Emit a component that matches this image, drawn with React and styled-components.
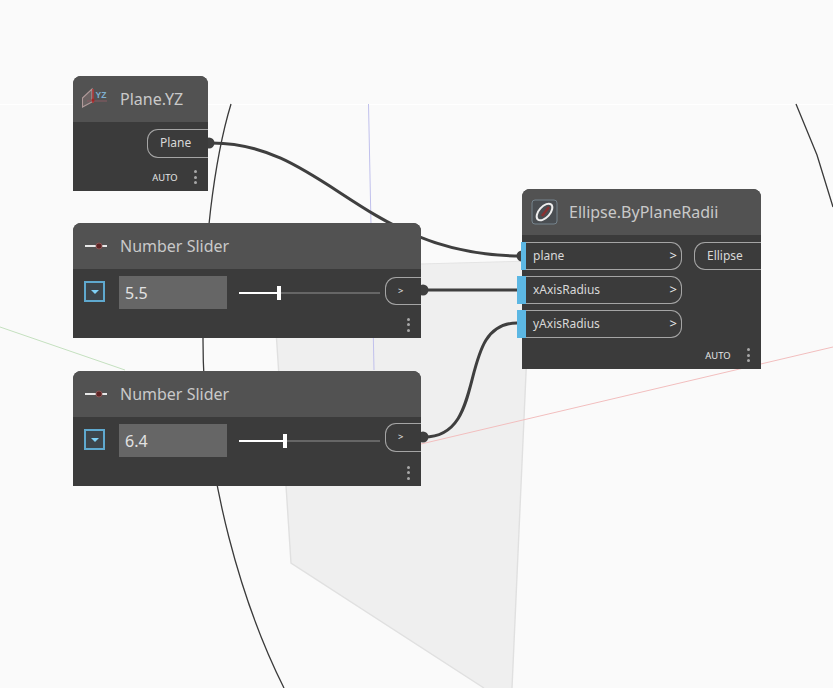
import React from 'react';
import styled, { createGlobalStyle } from 'styled-components';

const Global = createGlobalStyle`
  html, body {
    margin: 0;
    padding: 0;
    background: #fafafa;
  }
`;

const Canvas = styled.div`
  position: relative;
  width: 833px;
  height: 688px;
  overflow: hidden;
  background: #fafafa;
  font-family: "Noto Sans", "Open Sans", sans-serif;
`;

const TopBand = styled.div`
  height: 104px;
  border-bottom: 1px solid #ffffff;
`;

const Drawing = styled.svg`
  position: absolute;
  left: 0;
  top: 0;
  width: 833px;
  height: 688px;
`;

const Node = styled.div`
  position: absolute;
  left: ${(p) => p.$x}px;
  top: ${(p) => p.$y}px;
  width: ${(p) => p.$w}px;
  height: ${(p) => p.$h}px;
  background: #3b3b3b;
  border-radius: 8px 8px 0 0;
  display: flex;
  flex-direction: column;
`;

const Head = styled.div`
  height: 46px;
  flex: none;
  display: flex;
  align-items: center;
  gap: 10px;
  padding-left: 9px;
  background: #525252;
  border-radius: 8px 8px 0 0;
`;

const IconBox = styled.svg`
  width: 28px;
  height: 28px;
  flex: none;
`;

const Title = styled.div`
  color: #c9c9c9;
  font-size: 16px;
  white-space: nowrap;
`;

const Foot = styled.div`
  position: absolute;
  right: 0;
  bottom: 0;
  height: ${(p) => p.$h || 28}px;
  display: flex;
  align-items: center;
  gap: 16px;
  padding-right: 11.5px;
`;

const Auto = styled.span`
  color: #e6e6e6;
  font-size: 9.4px;
`;

const Dots = styled.span`
  display: flex;
  flex-direction: column;
  gap: 2.5px;
  i {
    width: 3px;
    height: 3px;
    border-radius: 50%;
    background: #a8a8a8;
  }
`;

const More = () => (
  <Dots>
    <i />
    <i />
    <i />
  </Dots>
);

const OutPort = styled.div`
  position: absolute;
  right: 0;
  top: ${(p) => p.$top}px;
  width: ${(p) => p.$w}px;
  height: ${(p) => p.$h}px;
  box-sizing: border-box;
  border: 1px solid #a5a5a5;
  border-right: none;
  border-radius: 11px 0 0 11px;
  color: #d8d8d8;
  font-size: 12px;
  display: flex;
  align-items: center;
  padding: 0 0 2px 12px;
`;

const Body = styled.div`
  display: flex;
  align-items: center;
  height: 33px;
  margin-top: 7px;
  padding-left: 11px;
`;

const Dropdown = styled.div`
  width: 21px;
  height: 21px;
  margin-top: -2px;
  box-sizing: border-box;
  border: 2px solid #5fa9cf;
  background: #3d454b;
  display: flex;
  align-items: center;
  justify-content: center;
  &::before {
    content: '';
    border-left: 4px solid transparent;
    border-right: 4px solid transparent;
    border-top: 4px solid #7fd0f5;
  }
`;

const NumberBox = styled.div`
  width: 108px;
  height: 33px;
  margin-left: 14px;
  box-sizing: border-box;
  padding-left: 6px;
  background: #666666;
  color: #e2e2e2;
  font-size: 16px;
  display: flex;
  align-items: center;
`;

const Track = styled.div`
  position: relative;
  width: 141px;
  height: 2px;
  margin-left: 12px;
  background: #666666;
`;

const Fill = styled.div`
  height: 2px;
  background: #fff;
`;

const Thumb = styled.div`
  position: absolute;
  top: -6px;
  width: 4px;
  height: 14px;
  background: #fff;
`;

const InPorts = styled.div`
  position: absolute;
  left: 0;
  top: 53px;
  display: flex;
  flex-direction: column;
  gap: 6px;
`;

const InRow = styled.div`
  display: flex;
  height: 28px;
`;

const Marker = styled.div`
  width: ${(p) => p.$w}px;
  margin-left: ${(p) => 4 - p.$w}px;
  background: #5cb7e3;
`;

const InPort = styled.div`
  width: 156px;
  box-sizing: border-box;
  border: 1px solid #a5a5a5;
  border-left: none;
  border-radius: 0 11px 11px 0;
  color: #d8d8d8;
  font-size: 12px;
  display: flex;
  align-items: center;
  justify-content: space-between;
  padding: 0 4px 2px 7px;
  span {
    color: #ececec;
    font-size: 13px;
  }
`;

const Slider = ({ x, y, value, pct, portTop, portH }) => (
  <Node $x={x} $y={y} $w={348} $h={115}>
    <Head>
      <IconBox viewBox="0 0 28 28">
        <path d="M3 14h11M20 14h5" stroke="#e8e8e8" strokeWidth="2" />
        <circle cx="17" cy="14" r="3" fill="#5f2525" stroke="#8a5555" />
      </IconBox>
      <Title>Number Slider</Title>
    </Head>
    <Body>
      <Dropdown />
      <NumberBox>{value}</NumberBox>
      <Track>
        <Fill style={{ width: `${pct}%` }} />
        <Thumb style={{ left: `${pct}%` }} />
      </Track>
    </Body>
    <OutPort $top={portTop} $w={36} $h={portH}>
      <Auto>&gt;</Auto>
    </OutPort>
    <Foot $h={27}>
      <More />
    </Foot>
  </Node>
);

const App = () => (
  <Canvas>
    <Global />
    <TopBand />
    <Drawing viewBox="0 0 833 688">
      <polygon points="272,268 531,261 512,688 484,688 291,563" fill="#efefef" />
      <path d="M272,268 L291,563 L484,688 M531,261 L512,688" fill="none" stroke="#e0e0e0" strokeWidth="1.4" />
      <path d="M272,268 L531,261" stroke="#e4e4e4" fill="none" />
      <path d="M368.5,104 L374,370" stroke="#c0c0ec" fill="none" />
      <path d="M0,327 L125,370" stroke="#c4e0bf" fill="none" />
      <path d="M421,444 L833,347" stroke="#f2bebe" fill="none" />
      <path d="M231,104 C214,160 203,250 203,340 C203,480 245,610 284,688" stroke="#3a3a3a" strokeWidth="1.3" fill="none" />
      <path d="M796,104 L817,155 L833,207" stroke="#3a3a3a" strokeWidth="1.3" fill="none" />
      <path d="M212,143 C325,143 365,256 521,256" stroke="#3f3f3f" strokeWidth="3" fill="none" />
      <path d="M424,290 L517,290" stroke="#3f3f3f" strokeWidth="3" fill="none" />
      <path d="M424,437 C490,437 455,323 517,323" stroke="#3f3f3f" strokeWidth="3" fill="none" />
      <circle cx="209" cy="143" r="5.5" fill="#3f3f3f" />
      <circle cx="423" cy="290" r="5.5" fill="#3f3f3f" />
      <circle cx="423" cy="437" r="5.5" fill="#3f3f3f" />
      <circle cx="522" cy="256" r="5.5" fill="#3f3f3f" />
    </Drawing>

    <Node $x={73} $y={76} $w={135} $h={115}>
      <Head>
        <IconBox viewBox="0 0 28 28">
          <path d="M0.5 13 L10 4 V17 L0.5 22Z" fill="#6a6262" stroke="#b09a9a" strokeWidth="1.1" />
          <path d="M5 16H25" stroke="#8a5a62" strokeWidth="1" />
          <path d="M11 4V18" stroke="#b23a3a" strokeWidth="1.6" />
          <circle cx="11" cy="15" r="1.6" fill="#a32525" />
          <text x="13.5" y="13" fill="#7fb0d0" fontSize="8.5" fontWeight="700" fontFamily="Liberation Sans">YZ</text>
        </IconBox>
        <Title>Plane.YZ</Title>
      </Head>
      <OutPort $top={53} $w={61} $h={29}>
        Plane
      </OutPort>
      <Foot>
        <Auto>AUTO</Auto>
        <More />
      </Foot>
    </Node>

    <Slider x={73} y={223} value="5.5" pct={27} portTop={54} portH={28} />
    <Slider x={73} y={371} value="6.4" pct={31.5} portTop={52} portH={29} />

    <Node $x={522} $y={189} $w={239} $h={180}>
      <Head>
        <IconBox viewBox="0 0 28 28">
          <rect x="1" y="2" width="25" height="24" rx="3" fill="#4a4e52" stroke="#75838c" />
          <path d="M11 18 L18 9" stroke="#8a3030" strokeWidth="2.5" />
          <ellipse cx="13.5" cy="14" rx="10" ry="5.5" transform="rotate(-48 13.5 14)" fill="none" stroke="#eeeeee" strokeWidth="2" />
        </IconBox>
        <Title>Ellipse.ByPlaneRadii</Title>
      </Head>
      <InPorts>
        <InRow>
          <Marker $w={5} />
          <InPort>
            plane<span>&gt;</span>
          </InPort>
        </InRow>
        <InRow>
          <Marker $w={9} />
          <InPort>
            xAxisRadius<span>&gt;</span>
          </InPort>
        </InRow>
        <InRow>
          <Marker $w={9} />
          <InPort>
            yAxisRadius<span>&gt;</span>
          </InPort>
        </InRow>
      </InPorts>
      <OutPort $top={53} $w={67} $h={28}>
        Ellipse
      </OutPort>
      <Foot>
        <Auto>AUTO</Auto>
        <More />
      </Foot>
    </Node>
  </Canvas>
);

export default App;
